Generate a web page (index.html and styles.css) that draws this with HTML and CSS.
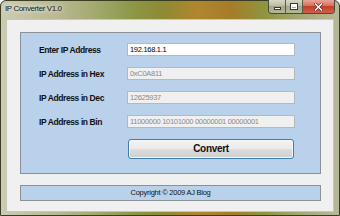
FILE: index.html
```html
<html lang="en">
<head>
    <meta charset="utf-8">
    <title>IP Converter V1.0</title>
    <link rel="stylesheet" href="styles.css">
</head>
<body>
<div class="window">
    <div class="titlebar">
        <span class="title">IP Converter V1.0</span>
        <div class="caption">
            <div class="cbtn min"><span class="bar"></span></div>
            <div class="cbtn max"><span class="box"></span></div>
            <div class="cbtn close">
                <svg width="9" height="8" viewBox="0 0 9 8">
                    <path d="M1.5 1 L7.5 7 M7.5 1 L1.5 7" stroke="#5a1a12" stroke-width="2.6" stroke-linecap="square"/>
                    <path d="M1.5 1 L7.5 7 M7.5 1 L1.5 7" stroke="#ffffff" stroke-width="1.5" stroke-linecap="square"/>
                </svg>
            </div>
        </div>
    </div>
    <div class="client">
        <div class="panel main">
            <div class="form">
                <label class="lbl">Enter IP Address</label>
                <div class="tb edit">192.168.1.1</div>
                <label class="lbl">IP Address in Hex</label>
                <div class="tb ro">0xC0A811</div>
                <label class="lbl">IP Address in Dec</label>
                <div class="tb ro">12625937</div>
                <label class="lbl">IP Address in Bin</label>
                <div class="tb ro">11000000 10101000 00000001 00000001</div>
                <div class="convert">Convert</div>
            </div>
        </div>
        <div class="panel footer">Copyright © 2009 AJ Blog</div>
    </div>
</div>
</body>
</html>
```

FILE: styles.css
```css
*{
    padding: 0;
    margin: 0;
    box-sizing: border-box;
}
html,body{
    width: 340px;
    height: 216px;
    overflow: hidden;
    font-family: "Liberation Sans", Arial, sans-serif;
}
.window{
    width: 340px;
    height: 216px;
    padding: 0 5px 5px 5px;
    border: 1px solid #3b3d22;
    border-radius: 6px 6px 0 0;
    background:
        linear-gradient(90deg, rgba(255,255,255,0.3), rgba(255,255,255,0) 40%),
        linear-gradient(90deg, #b6b592 0%, #a8a878 18%, #8c9848 38%, #8e8a34 48%, #b0862e 58%, #a67c28 68%, #8f9440 78%, #a4a872 88%, #b8b89a 100%);
}
.titlebar{
    height: 18px;
    display: flex;
    justify-content: space-between;
    align-items: flex-start;
}
.title{
    margin-top: 3px;
    margin-left: -1px;
    font-size: 8px;
    letter-spacing: -0.4px;
    color: #1a1a14;
    text-shadow: 0 0 4px rgba(255,255,255,0.9), 0 0 7px rgba(255,255,255,0.7);
}
.caption{
    display: flex;
    margin-top: -1px;
    margin-right: -1px;
    height: 14px;
    border: 1px solid #4a4a38;
    border-top: none;
    border-radius: 0 0 4px 4px;
    overflow: hidden;
}
.cbtn{
    height: 13px;
    display: flex;
    align-items: center;
    justify-content: center;
    border-right: 1px solid #5a5a46;
    background: linear-gradient(#d8d8c6, #bcbca4 45%, #a6a788 50%, #b4b59a);
}
.min{
    width: 17px;
}
.max{
    width: 17px;
}
.min .bar{
    width: 7px;
    height: 3px;
    margin-top: 4px;
    background: #fff;
    border: 1px solid #3a3a30;
}
.max .box{
    width: 8px;
    height: 7px;
    border: 1px solid #3a3a30;
    box-shadow: inset 0 0 0 1px #fff, inset 0 2px 0 1px #fff;
}
.close{
    width: 31px;
    border-right: none;
    background: linear-gradient(#e8a598, #d6705e 45%, #c1402c 50%, #d0604a);
}
.client{
    height: 193px;
    background-color: #f0f0f0;
    border: 1px solid #c8c8b8;
    padding: 12px 0 0 13px;
}
.panel{
    width: 301px;
    background-color: #b9d1ea;
    border: 1px solid #8c9196;
}
.main{
    height: 142px;
}
.form{
    display: grid;
    grid-template-columns: 88px 168px;
    grid-auto-rows: 13px;
    row-gap: 11px;
    padding: 10px 0 0 18px;
    align-items: center;
}
.lbl{
    font-size: 8.5px;
    letter-spacing: -0.4px;
    font-weight: bold;
    color: #111;
}
.tb{
    height: 13px;
    border: 1px solid #b4b9be;
    padding-left: 2px;
    font-size: 7.5px;
    letter-spacing: -0.3px;
    line-height: 11px;
    white-space: nowrap;
    overflow: hidden;
}
.edit{
    background-color: #ffffff;
    color: #000;
}
.ro{
    background-color: #f0f0f0;
    color: #8a8a8a;
}
.convert{
    grid-column: 2;
    grid-row: span 2;
    align-self: start;
    height: 20px;
    width: 166px;
    margin-left: 1px;
    border: 1px solid #3c7fb1;
    border-radius: 3px;
    box-shadow: inset 0 0 0 1px #f4f8fb;
    background: linear-gradient(#f2f2f2, #ebebeb 50%, #dddddd 51%, #cfcfcf);
    text-align: center;
    line-height: 18px;
    font-size: 10px;
    letter-spacing: -0.3px;
    font-weight: bold;
    color: #111;
}
.footer{
    margin-top: 11px;
    height: 16px;
    text-align: center;
    font-size: 7.5px;
    letter-spacing: -0.25px;
    line-height: 14px;
    color: #111;
}
```
